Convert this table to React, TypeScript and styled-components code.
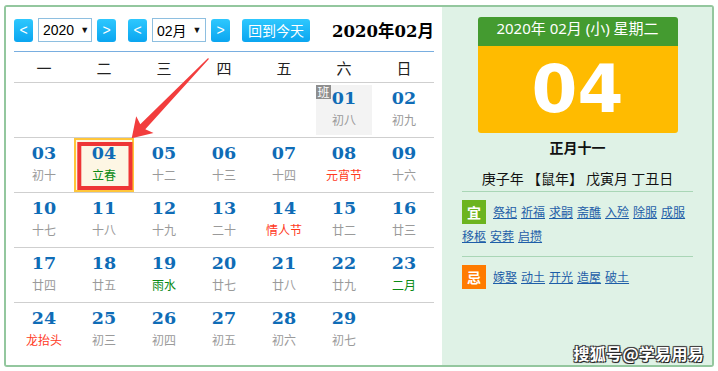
import React from "react";
import styled, { createGlobalStyle } from "styled-components";

const GlobalStyle = createGlobalStyle`
  html, body { margin: 0; padding: 0; background: #fff; }
  body { font-family: "Noto Sans CJK SC", "Noto Sans", sans-serif; }
`;

const CJK = `"Noto Sans CJK SC", sans-serif`;

const Page = styled.div`
  position: relative;
  width: 718px;
  height: 371px;
  padding: 5px 0 0 4px;
  box-sizing: border-box;
`;

const Frame = styled.div`
  position: relative;
  width: 710px;
  height: 362px;
  box-sizing: border-box;
  border: 2px solid #93c79e;
  border-radius: 3px;
  display: flex;
  overflow: hidden;
`;

const CalendarPane = styled.section`
  width: 436px;
  flex: none;
  background: #fff;
  padding: 11px 8px 0;
  box-sizing: border-box;
`;

const Toolbar = styled.div`
  display: flex;
  align-items: center;
  gap: 12px;
  height: 24px;
  padding-bottom: 9px;
  border-bottom: 1px solid #79aee0;
`;

const NavGroup = styled.div`
  display: flex;
  align-items: center;
  gap: 5px;
`;

const BlueButton = styled.div<{ $wide?: boolean }>`
  height: 23px;
  min-width: 19px;
  padding: ${(p) => (p.$wide ? "0 6px" : "0")};
  box-sizing: border-box;
  border-radius: 3px;
  background: linear-gradient(#2ec8fe, #0aa5f0);
  color: #fff;
  display: flex;
  align-items: center;
  justify-content: center;
  font: ${(p) => (p.$wide ? `14px ${CJK}` : `14px "Liberation Sans", sans-serif`)};
`;

const SelectBox = styled.div`
  width: 54px;
  height: 24px;
  box-sizing: border-box;
  border: 1px solid #8ebfe0;
  background: #fff;
  display: flex;
  align-items: center;
  padding: 0 0 0 4px;
  font: 14px "Liberation Sans", "Noto Sans CJK SC", sans-serif;
  color: #000;
`;

const Caret = styled.span`
  margin-left: 6px;
  font-size: 9px;
  color: #111;
`;

const MonthTitle = styled.h1`
  margin: 0 0 0 auto;
  font: bold 16.5px "DejaVu Serif", "Noto Sans CJK SC", serif;
  color: #000;
`;

const Grid7 = styled.div`
  display: grid;
  grid-template-columns: repeat(7, 60px);
`;

const WeekHeader = styled(Grid7)`
  height: 30px;
  align-items: center;
  border-bottom: 1px solid #cfcfcf;
  font: 15px ${CJK};
  color: #222;
  text-align: center;
`;

const WeekRow = styled(Grid7)`
  height: 54px;
  border-bottom: 1px solid #cfcfcf;
  &:last-child { border-bottom: none; }
`;

const DayCell = styled.div<{ $selected?: boolean; $shaded?: boolean }>`
  position: relative;
  display: flex;
  flex-direction: column;
  align-items: center;
  padding-top: 5px;
  box-sizing: border-box;
  background: ${(p) => (p.$selected ? "#fdf6e4" : p.$shaded ? "#f3f3f3" : "transparent")};
  box-shadow: ${(p) =>
    p.$selected ? "inset 0 0 0 2px #ffc63a" : p.$shaded ? "inset 0 0 0 2px #fff" : "none"};
`;

const DayNum = styled.div`
  font: bold 17.5px "DejaVu Serif", serif;
  line-height: 21px;
  color: #0f6cb6;
`;

const toneColor = { normal: "#9a9a9a", holiday: "#ff3a1e", term: "#0a8a14" } as const;
type Tone = keyof typeof toneColor;

const Lunar = styled.div<{ $tone: Tone }>`
  margin-top: 1px;
  font: 12px ${CJK};
  line-height: 19px;
  color: ${(p) => toneColor[p.$tone]};
`;

const WorkBadge = styled.span`
  position: absolute;
  top: 2px;
  left: 2px;
  width: 15px;
  height: 14px;
  background: #8e8e8e;
  color: #fff;
  font: 12px ${CJK};
  line-height: 14px;
  text-align: center;
`;

const InfoPane = styled.aside`
  flex: 1;
  background: #dff2e6;
  padding: 10px 19px 0 20px;
  box-sizing: border-box;
`;

const DateCard = styled.div`
  width: 200px;
  margin: 0 auto;
  border-radius: 3px;
  overflow: hidden;
`;

const CardHeader = styled.div`
  height: 29px;
  line-height: 29px;
  background: #449b30;
  color: #fff;
  text-align: center;
  font: 15px "Noto Sans", "Noto Sans CJK SC", sans-serif;
`;

const CardBody = styled.div`
  height: 87px;
  background: #ffbb00;
  color: #fff;
  display: flex;
  align-items: center;
  justify-content: center;
  font: bold 66px "DejaVu Sans", sans-serif;
`;

const LunarDay = styled.div`
  margin-top: 4px;
  line-height: 20px;
  text-align: center;
  font: bold 14px ${CJK};
  color: #111;
`;

const GanZhi = styled.div`
  margin-top: 11px;
  line-height: 20px;
  text-align: center;
  white-space: nowrap;
  font: 14px ${CJK};
  color: #111;
`;

const Divider = styled.div<{ $top?: number }>`
  height: 1px;
  background: #a9d6b6;
  margin-top: ${(p) => p.$top ?? 0}px;
`;

const Almanac = styled.div`
  padding: 8px 0;
  font: 12px ${CJK};
  line-height: 24px;
`;

const AlmanacBadge = styled.span<{ $kind: "yi" | "ji" }>`
  display: inline-block;
  vertical-align: top;
  width: 24px;
  height: 24px;
  margin-right: 7px;
  background: ${(p) => (p.$kind === "yi" ? "#6cb41f" : "#ff7b00")};
  color: #fff;
  text-align: center;
  font: bold 14px ${CJK};
  line-height: 24px;
`;

const AlmanacLink = styled.span`
  color: #1e5ea8;
  text-decoration: underline;
  margin-right: 4px;
`;

const Watermark = styled.div`
  position: absolute;
  right: 8px;
  bottom: 2px;
  font: bold 16px ${CJK};
  line-height: 20px;
  color: #fff;
  letter-spacing: 0.3px;
  text-shadow: 1px 1px 0 #222, -1px -1px 0 #444, 1px -1px 0 #444, -1px 1px 0 #444, 0 0 2px #000;
`;

const Overlay = styled.svg`
  position: absolute;
  left: 0;
  top: 0;
  pointer-events: none;
`;

type Day = { n: string; l: string; tone?: Tone; selected?: boolean; work?: boolean } | null;

const weeks: Day[][] = [
  [null, null, null, null, null, { n: "01", l: "初八", work: true }, { n: "02", l: "初九" }],
  [
    { n: "03", l: "初十" },
    { n: "04", l: "立春", tone: "term", selected: true },
    { n: "05", l: "十二" },
    { n: "06", l: "十三" },
    { n: "07", l: "十四" },
    { n: "08", l: "元宵节", tone: "holiday" },
    { n: "09", l: "十六" },
  ],
  [
    { n: "10", l: "十七" },
    { n: "11", l: "十八" },
    { n: "12", l: "十九" },
    { n: "13", l: "二十" },
    { n: "14", l: "情人节", tone: "holiday" },
    { n: "15", l: "廿二" },
    { n: "16", l: "廿三" },
  ],
  [
    { n: "17", l: "廿四" },
    { n: "18", l: "廿五" },
    { n: "19", l: "雨水", tone: "term" },
    { n: "20", l: "廿七" },
    { n: "21", l: "廿八" },
    { n: "22", l: "廿九" },
    { n: "23", l: "二月", tone: "term" },
  ],
  [
    { n: "24", l: "龙抬头", tone: "holiday" },
    { n: "25", l: "初三" },
    { n: "26", l: "初四" },
    { n: "27", l: "初五" },
    { n: "28", l: "初六" },
    { n: "29", l: "初七" },
    null,
  ],
];

const weekdays = ["一", "二", "三", "四", "五", "六", "日"];
const yi = ["祭祀", "祈福", "求嗣", "斋醮", "入殓", "除服", "成服", "移柩", "安葬", "启攒"];
const ji = ["嫁娶", "动土", "开光", "造屋", "破土"];

export default function App() {
  return (
    <Page>
      <GlobalStyle />
      <Frame>
        <CalendarPane>
          <Toolbar>
            <NavGroup>
              <BlueButton>&lt;</BlueButton>
              <SelectBox>
                <span>2020</span>
                <Caret>▼</Caret>
              </SelectBox>
              <BlueButton>&gt;</BlueButton>
            </NavGroup>
            <NavGroup>
              <BlueButton>&lt;</BlueButton>
              <SelectBox>
                <span>02月</span>
                <Caret>▼</Caret>
              </SelectBox>
              <BlueButton>&gt;</BlueButton>
            </NavGroup>
            <BlueButton $wide>回到今天</BlueButton>
            <MonthTitle>2020年02月</MonthTitle>
          </Toolbar>
          <WeekHeader>
            {weekdays.map((w) => (
              <div key={w}>{w}</div>
            ))}
          </WeekHeader>
          {weeks.map((week, wi) => (
            <WeekRow key={wi}>
              {week.map((d, di) =>
                d ? (
                  <DayCell key={di} $selected={d.selected} $shaded={d.work}>
                    {d.work && <WorkBadge>班</WorkBadge>}
                    <DayNum>{d.n}</DayNum>
                    <Lunar $tone={d.tone ?? "normal"}>{d.l}</Lunar>
                  </DayCell>
                ) : (
                  <DayCell key={di} />
                )
              )}
            </WeekRow>
          ))}
        </CalendarPane>
        <InfoPane>
          <DateCard>
            <CardHeader>2020年 02月 (小) 星期二</CardHeader>
            <CardBody>04</CardBody>
          </DateCard>
          <LunarDay>正月十一</LunarDay>
          <GanZhi>庚子年 【鼠年】 戊寅月 丁丑日</GanZhi>
          <Divider $top={3} />
          <Almanac>
            <AlmanacBadge $kind="yi">宜</AlmanacBadge>
            {yi.map((t) => (
              <AlmanacLink key={t}>{t}</AlmanacLink>
            ))}
          </Almanac>
          <Divider />
          <Almanac>
            <AlmanacBadge $kind="ji">忌</AlmanacBadge>
            {ji.map((t) => (
              <AlmanacLink key={t}>{t}</AlmanacLink>
            ))}
          </Almanac>
        </InfoPane>
        <Watermark>搜狐号@学易用易</Watermark>
      </Frame>
      <Overlay width={718} height={371} viewBox="0 0 718 371">
        <rect x={79.3} y={144} width={51.2} height={44} fill="none" stroke="#ee3535" strokeWidth={4} />
        <polygon
          fill="#f23d3d"
          points="131.7,138.3 153.5,132.9 145.3,129.2 208.9,58.9 208.1,58.1 140.3,124.3 136.2,116.3"
        />
      </Overlay>
    </Page>
  );
}
